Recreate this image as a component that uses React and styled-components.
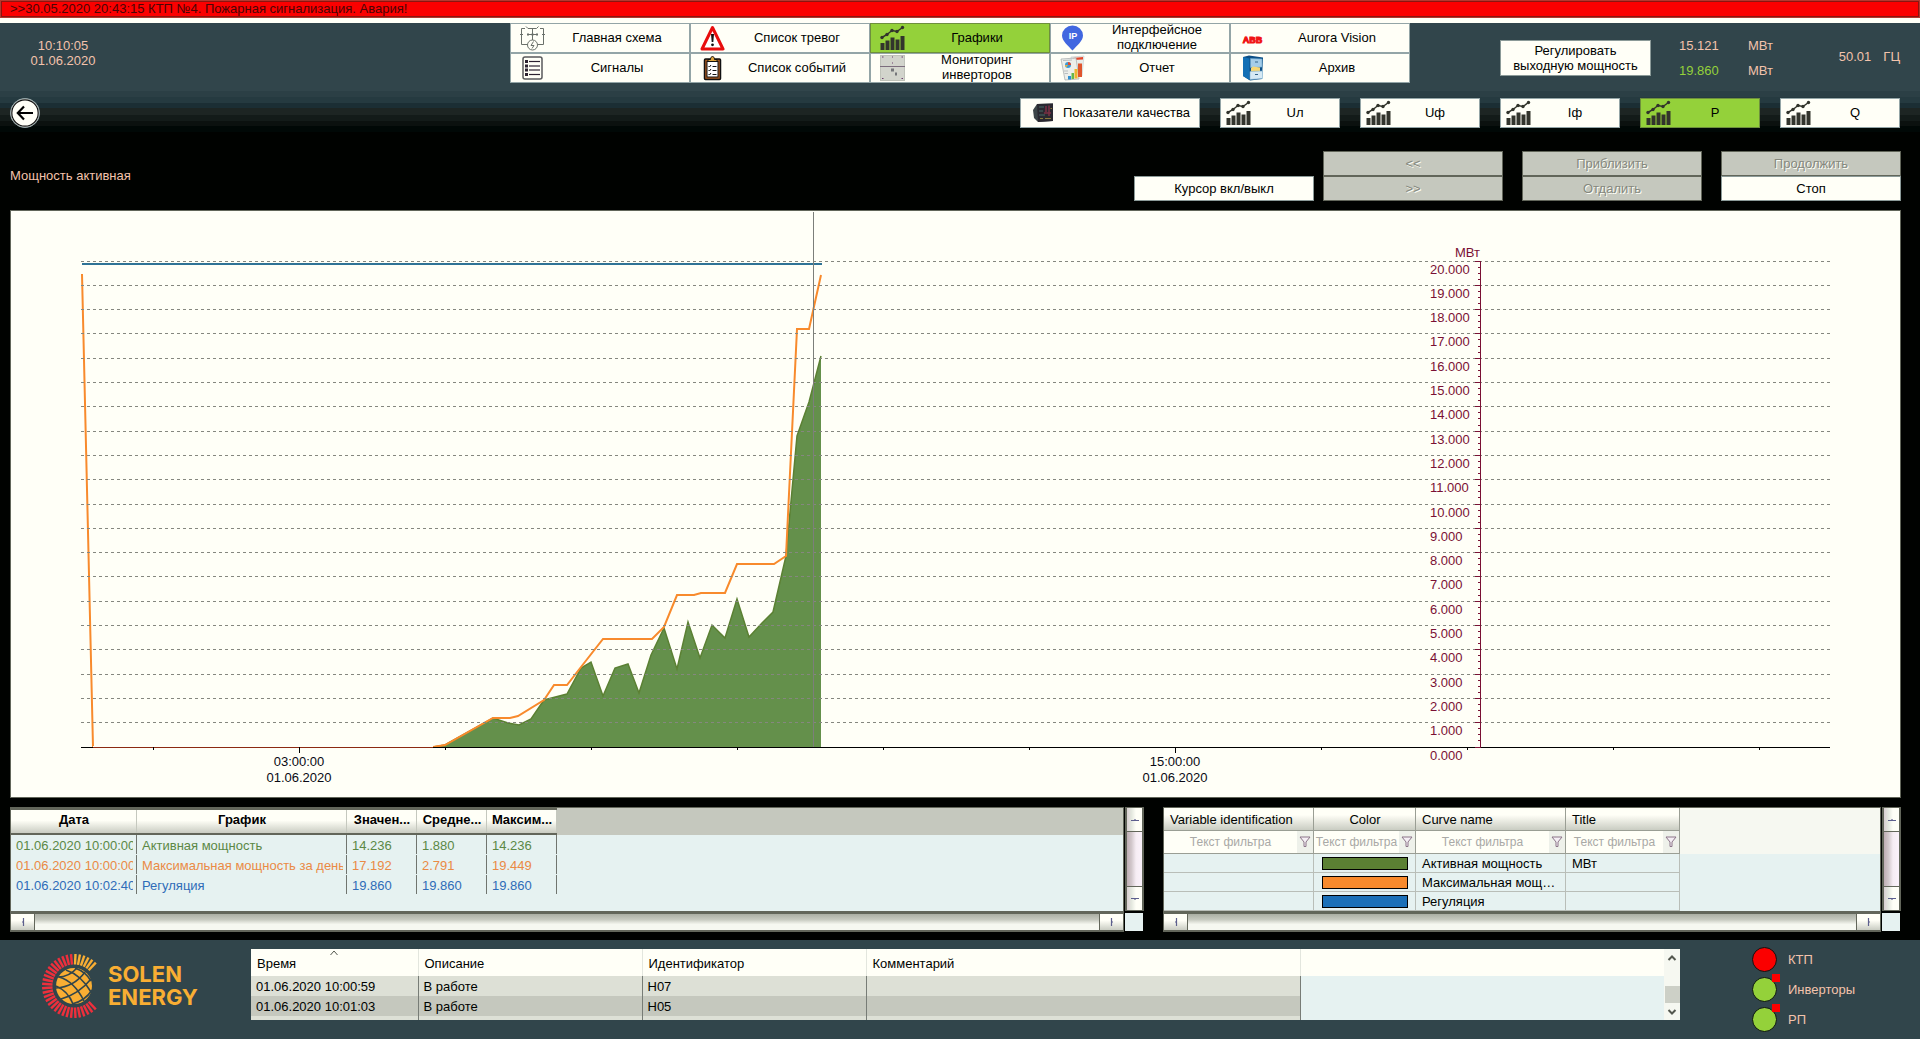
import React from "react";
import styled, { createGlobalStyle, css } from "styled-components";

const color = {
  paper: "#fffff7",
  slate: "#31454b",
  black: "#000200",
  peach: "#f3c3ac",
  lime: "#94d13a",
  mint: "#e6f2f1",
  grey: "#c5c8be",
  edge: "#62665a",
  axis: "#7a1034",
  green: "#5b8033",
  orange: "#f88a2c",
  blue: "#1b70b8",
};

const Global = createGlobalStyle`
  *, *::before, *::after { box-sizing: border-box; }
  html, body { margin: 0; background: ${color.black}; }
  body, button, input {
    font-family: "Liberation Sans", Arial, sans-serif;
    font-size: 13px;
    line-height: 15px;
  }
  button { padding: 0; cursor: pointer; }
  table { border-collapse: collapse; table-layout: fixed; }
  th, td { padding: 0; text-align: left; }
`;

const Page = styled.div`
  display: flex;
  flex-direction: column;
  min-height: 100vh;
`;

const AlertBar = styled.div`
  height: 18px;
  padding-left: 9px;
  border: 1px solid #b3392f;
  background: #fb0000;
  box-shadow: inset 0 0 0 1px #8c1410;
  color: #4a0505;
  line-height: 16px;
  white-space: nowrap;
  overflow: hidden;
`;

const Header = styled.header`
  display: grid;
  grid-template-columns: 1fr 900px 1fr;
  border-top: 5px solid ${color.paper};
  background: ${color.slate};
  color: ${color.peach};
`;

const Clock = styled.div`
  width: 126px;
  padding-top: 15px;
  text-align: center;
`;

const Nav = styled.nav`
  display: grid;
  grid-template-columns: repeat(5, 1fr);
`;

const IconButton = styled.button`
  display: flex;
  align-items: center;
  width: ${(p) => (p.$width ? `${p.$width}px` : "auto")};
  height: 30px;
  padding-left: ${(p) => p.$inset ?? 9}px;
  border: 1px solid ${(p) => (p.$active ? "#6e8f3c" : "#93a5a7")};
  background: ${(p) => (p.$active ? color.lime : color.paper)};
  color: ${color.black};

  svg { flex: none; }
  span { flex: 1; padding-bottom: 2px; text-align: center; }
`;

const PlainButton = styled.button`
  width: ${(p) => p.$width ?? 180}px;
  height: ${(p) => p.$height ?? 25}px;
  padding: 0 10px;
  border: 1px solid #8b9a98;
  background: ${color.paper};
  color: ${color.black};

  &:disabled {
    border-color: ${color.edge};
    background: ${color.grey};
    color: #85887e;
    text-shadow: 1px 1px 0 ${color.paper};
    cursor: default;
  }
`;

const Readings = styled.div`
  display: flex;
  align-items: flex-start;
  padding: 15px 20px 0 90px;
`;

const Regulate = styled.div`
  padding-top: 2px;
`;

const PowerGrid = styled.dl`
  display: grid;
  grid-template-columns: 69px auto;
  row-gap: 10px;
  margin: 0 0 0 28px;
  dt, dd { margin: 0; }
`;

const Reading = styled.dt`
  color: ${(p) => (p.$good ? color.lime : color.peach)};
`;

const Frequency = styled.div`
  display: flex;
  gap: 12px;
  margin: 11px 0 0 auto;
`;

const SubHeader = styled.div`
  display: flex;
  align-items: center;
  gap: 20px;
  padding: 15px 20px 4px 10px;
  background: linear-gradient(
    ${color.slate} 8px, #2b3f45 8px, #2b3f45 14px, #253a40 14px, #253a40 20px,
    #1b2e34 20px, #1b2e34 25px, #1d2523 25px, #1d2523 32px, #131b19 32px,
    #131b19 38px, #0b110f 38px, #0b110f 43px, #000806 43px
  );
`;

const BackButton = styled.button`
  display: flex;
  width: 30px;
  height: 30px;
  margin-right: auto;
  border: 0;
  border-radius: 50%;
  background: none;
`;

const ToolRow = styled.div`
  display: flex;
  align-items: center;
  gap: 19px;
  padding: 19px 19px 9px 10px;
  background: ${color.black};
`;

const Title = styled.h1`
  margin: 0 auto 0 0;
  padding-bottom: 2px;
  color: ${color.peach};
  font-size: 13px;
  font-weight: 400;
`;

const Stack = styled.div`
  display: flex;
  flex-direction: column;
`;

const CursorGroup = styled.div`
  display: flex;
  align-items: flex-end;
  gap: 9px;
`;

const ChartPanel = styled.section`
  margin: 0 19px 9px 10px;
  border: 1px solid ${color.edge};
  background: ${color.paper};
  svg { display: block; width: 100%; height: auto; }
  text { font-family: "Liberation Sans", Arial, sans-serif; font-size: 13px; }
`;

const Tables = styled.div`
  display: grid;
  grid-template-columns: minmax(0, 1134fr) minmax(0, 738fr);
  gap: 19px;
  padding: 0 19px 8px 10px;
`;

const ScrollPanel = styled.section`
  display: grid;
  grid-template-columns: minmax(0, 1fr) 19px;
  grid-template-rows: 104px 21px;
  column-gap: 1px;
`;

const Viewport = styled.div`
  overflow: hidden;
  border: 1px solid ${color.edge};
  border-bottom: 0;
  background: linear-gradient(${(p) => p.$top} ${(p) => p.$head}px, ${color.mint} ${(p) => p.$head}px);
`;

const VBar = styled.div`
  display: flex;
  flex-direction: column;
  justify-content: space-between;
  border: 1px solid ${color.edge};
  border-left-width: 2px;
  border-right-width: 2px;
  background: linear-gradient(90deg, #bfaeb4, #d2c8cc 30%, #f6edf4 60%, #fbf2fb);
`;

const HBar = styled.div`
  display: flex;
  justify-content: space-between;
  border: solid ${color.edge};
  border-width: 3px 1px 2px;
  background: linear-gradient(#aaaea3, #c6c9bf 35%, #e0e2da 50%, #f6f8f1 65%);
`;

const Corner = styled.div`
  margin: 2px 1px 1px 0;
  background: ${color.mint};
`;

const ArrowButton = styled.button`
  display: flex;
  align-items: center;
  justify-content: center;
  border: 0 solid ${color.edge};
  ${(p) =>
    p.$vertical
      ? css`
          height: 24px;
          background: linear-gradient(90deg, #d9cfd2, #e4e8df 30%, ${color.paper} 60%);
          &:first-child { border-bottom-width: 1px; }
          &:last-child { border-top-width: 1px; }
        `
      : css`
          width: 24px;
          background: linear-gradient(${color.paper} 40%, #c9ccc2);
          &:first-child { border-right-width: 1px; }
          &:last-child { border-left-width: 1px; }
        `}
`;

const ValueTable = styled.table`
  width: 546px;
  border-collapse: separate;
  border-spacing: 0;
  th {
    height: 27px;
    padding-top: 2px;
    border: solid ${color.edge};
    border-width: 2px 0 2px;
    box-shadow: inset -1px 0 0 ${color.grey};
    background: linear-gradient(${color.paper} 45%, #c9ccc2);
    font-weight: 700;
    text-align: center;
    vertical-align: top;
    white-space: nowrap;
  }
  td {
    height: 20px;
    padding: 0 4px 0 5px;
    background: linear-gradient(#70756f, #70756f) right top / 1px 19px no-repeat;
    white-space: nowrap;
  }
`;

const Clip = styled.div`
  overflow: hidden;
`;

const ValueRow = styled.tr`
  color: ${(p) => p.$color};
`;

const CurveTable = styled.table`
  width: 516px;
  color: ${color.black};
  th, td {
    box-shadow: inset -1px -1px 0 #b9beb8;
    white-space: nowrap;
    overflow: hidden;
    text-overflow: ellipsis;
  }
  thead th {
    height: 23px;
    padding: 0 6px;
    box-shadow: inset -1px -1px 0 #9a9e94;
    background: linear-gradient(${color.paper} 30%, #c6c9bf);
    font-weight: 400;
  }
  thead td {
    height: 23px;
    box-shadow: inset -1px -1px 0 #9a9e94;
    background: ${color.paper};
  }
  tbody td { height: 19px; padding: 0 6px; }
  th:nth-child(2) { text-align: center; }
`;

const FilterCell = styled.div`
  display: flex;
  height: 22px;
  margin: 0 1px 1px 0;
`;

const FilterInput = styled.input`
  flex: 1;
  min-width: 0;
  padding: 0;
  border: 0;
  background: none;
  font-size: 12px;
  text-align: center;
  &::placeholder { color: #a9a9a6; opacity: 1; }
`;

const FilterButton = styled.button`
  display: flex;
  align-items: center;
  justify-content: center;
  width: 16px;
  border: 0;
  background: #eef1ea;
`;

const Swatch = styled.div`
  width: 86px;
  height: 13px;
  margin: 0 auto;
  border: 1px solid #000;
  background: ${(p) => p.$color};
`;

const Footer = styled.footer`
  display: flex;
  flex: 1;
  align-items: flex-start;
  min-height: 99px;
  background: ${color.slate};
`;

const Brand = styled.div`
  display: flex;
  align-items: center;
  gap: 11px;
  flex: none;
  width: 251px;
  padding: 13px 0 0 41px;
  color: #f9ae33;
  font-family: Inter, "Open Sans", sans-serif;
  font-size: 22px;
  font-weight: 700;
  line-height: 23px;
`;

const AlarmPanel = styled.section`
  display: flex;
  flex: 1;
  height: 71px;
  margin-top: 9px;
  overflow: hidden;
  background: linear-gradient(${color.paper} 27px, ${color.mint} 27px);
`;

const AlarmTable = styled.table`
  width: 1049px;
  color: ${color.black};
  th {
    position: relative;
    height: 27px;
    padding: 2px 6px 0;
    border-right: 1px solid #e3e6de;
    font-weight: 400;
  }
  td { height: 20px; padding: 0 5px; border-right: 1px solid #777c76; }
  tbody tr { background: #dde0d6; }
  tbody tr:nth-child(2) { background: ${color.grey}; }
`;

const SortMark = styled.svg`
  position: absolute;
  top: 1px;
  left: 50%;
  margin-left: -4px;
`;

const AlarmScroll = styled.div`
  display: flex;
  flex-direction: column;
  align-items: center;
  flex: none;
  width: 16px;
  margin-left: auto;
  background: #f6f8f1;
`;

const ScrollArrow = styled.button`
  display: flex;
  align-items: center;
  justify-content: center;
  width: 16px;
  height: 17px;
  border: 0;
  background: none;
`;

const Thumb = styled.div`
  width: 15px;
  height: 17px;
  margin-top: auto;
  background: #cdd0c7;
`;

const StatusList = styled.ul`
  display: flex;
  flex-direction: column;
  gap: 5px;
  flex: none;
  width: 240px;
  margin: 0;
  padding: 7px 0 0 72px;
  list-style: none;
  color: ${color.peach};
`;

const StatusItem = styled.li`
  display: flex;
  align-items: center;
  gap: 11px;
`;

const Lamp = styled.span`
  position: relative;
  width: 25px;
  height: 25px;
  border: 1px solid #0c1412;
  border-radius: 50%;
  background: ${(p) => (p.$bad ? "#fb0000" : color.lime)};
`;

const Flag = styled.i`
  position: absolute;
  top: -4px;
  right: -4px;
  width: 8px;
  height: 8px;
  background: #fb0000;
`;

/* ---------- icons ---------- */

const SchemeIcon = () => (
  <svg width="25" height="26" viewBox="0 0 25 26" fill="none" stroke="#6a706a" strokeWidth="1">
    <path d="M6 1.5 8 3.5H16.500L18.500 1.500M12.500 3.500V15M1.500 3.500H5M1.500 3.500V19.500H7.500M23.500 3.500H20M23.500 3.500V19.500H17.500M7 9.500H18M0 9.500H3M22 9.500H25" />
    <circle cx="12.500" cy="20" r="5" />
    <path d="M13.500 16.500 11 20.500H14L12 23.500" />
    <path d="M8 8.500V10.500M17 8.500V10.500M12.500 8.500V10.500" strokeWidth="2" />
  </svg>
);

const SignalsIcon = () => (
  <svg width="25" height="26" viewBox="0 0 25 26">
    <rect x="3" y="2" width="19" height="22" rx="2" fill="#fffff7" stroke="#5a5a5c" strokeWidth="1.500" />
    {[6.5, 11, 15, 19.5].map((y) => (
      <g key={y} stroke="#2b2030">
        <path d={`M5 ${y}H8`} strokeWidth="3" />
        <path d={`M9 ${y}H20`} strokeWidth="1.200" />
      </g>
    ))}
  </svg>
);

const AlarmIcon = () => (
  <svg width="25" height="26" viewBox="0 0 25 26">
    <path d="M12.500 2.500 23 24H2Z" fill="#fff" stroke="#e80d0d" strokeWidth="3" strokeLinejoin="round" />
    <path d="M11 9H14L13.300 17H11.700Z" fill="#111" />
    <circle cx="12.500" cy="19.800" r="1.400" fill="#111" />
  </svg>
);

const ClipboardIcon = () => (
  <svg width="25" height="26" viewBox="0 0 25 26">
    <rect x="4.500" y="4" width="16" height="20.500" rx="1" fill="#a9591f" stroke="#111" strokeWidth="1.500" />
    <rect x="7" y="6.500" width="11" height="15.500" fill="#fff" stroke="#111" />
    <path d="M8 6.500V4.500H10.500C10.500 0.500 14.500 0.500 14.500 4.500H17V6.500Z" fill="#e0a63c" stroke="#111" />
    <path d="M8.500 11 9.500 12 11 10M8.500 15 9.500 16 11 14M8.500 19 9.500 20 11 18M12.500 11.500H16.500M12.500 15.500H16.500M12.500 19.500H16.500" stroke="#111" fill="none" />
  </svg>
);

const ChartIcon = () => (
  <svg width="25" height="26" viewBox="0 0 25 26">
    <path d="M2 12.500 7 9.500 12 5.500 17 6.500 22.500 2.500" fill="none" stroke="#32342c" strokeWidth="1.500" />
    {[[2, 12.5], [7, 9.5], [12, 5.5], [17, 6.5], [22.5, 2.5]].map(([x, y]) => (
      <circle key={x} cx={x} cy={y} r="1.700" fill="#32342c" />
    ))}
    <path d="M0.500 18H4.500V25H0.500ZM5.500 15.500H9.500V25H5.500ZM10.500 12.500H14.500V25H10.500ZM15.500 14.500H19.500V25H15.500ZM20.500 11H24.500V25H20.500Z" fill="#32342c" />
  </svg>
);

const InverterIcon = () => (
  <svg width="25" height="26" viewBox="0 0 25 26">
    <rect x="0.500" y="0.500" width="24" height="25" fill="#d2d4cc" stroke="#bfc2b9" />
    <path d="M0 11.500H25" stroke="#7c6d7d" />
    <path d="M11 13.500H14V16.500H11ZM15 17.500H17V20.500H15Z" fill="#75767a" />
    <path d="M2 2H3.500M21.500 2H23M12 2H13M12 8H13M2 23.500H3.500M21.500 23.500H23" stroke="#6b3d6d" />
  </svg>
);

const IpIcon = () => (
  <svg width="25" height="26" viewBox="0 0 25 26">
    <path d="M12.500 25.500C8 20.500 2 16 2 10.500A10.500 10 0 0 1 23 10.500C23 16 17 20.500 12.500 25.500Z" fill="#4167e0" />
    <text x="13" y="14" textAnchor="middle" fontSize="9" fontWeight="700" fontFamily="Liberation Sans, sans-serif" fill="#fff">IP</text>
  </svg>
);

const ReportIcon = () => (
  <svg width="25" height="26" viewBox="0 0 25 26">
    <path d="M11 2 24 1 22 21 12 23Z" fill="#e9ece8" stroke="#c5cacc" strokeWidth=".6" />
    <path d="M13 3 23 2V4.500L13 5Z" fill="#e4472b" />
    <path d="M1 4 16 3 19 24 5 25Z" fill="#eceeea" stroke="#a3a9aa" strokeWidth=".7" />
    <path d="M3 5.500 12 5" stroke="#b9bec0" />
    <circle cx="8" cy="10" r="3" fill="#3a9ad6" />
    <path d="M8 10V7A3 3 0 0 1 11 10Z" fill="#e4472b" />
    <path d="M5 10H8L6 12.500Z" fill="#f2b033" />
    <path d="M4 16H8M4.500 18.500H8" stroke="#b9bec0" />
    <path d="M8 21H11V24.500H8Z" fill="#2f8fd0" />
    <path d="M11.500 18H14V24H11.500Z" fill="#66b847" />
    <path d="M14.500 14H17.500V23.500H14.500Z" fill="#f0b32c" />
    <path d="M18 8.500H22V22H18Z" fill="#e0552c" />
  </svg>
);

const AbbIcon = () => (
  <svg width="25" height="26" viewBox="0 0 25 26">
    <text x="12.500" y="18" textAnchor="middle" fontSize="9" fontWeight="700" fontFamily="Liberation Sans, sans-serif" fill="#f01414" stroke="#f01414" strokeWidth="1">ABB</text>
  </svg>
);

const ArchiveIcon = () => (
  <svg width="25" height="26" viewBox="0 0 25 26">
    <path d="M3 2 9 0.500 23 2.500 22 24 10 25.500 3 21Z" fill="#0c4f86" />
    <path d="M3 2 9.500 3.500V25L3 21Z" fill="#1370b5" />
    <path d="M10.500 3.500 22 4V12L10.500 12.500Z" fill="#a5cde8" stroke="#6aa6cf" strokeWidth=".6" />
    <path d="M15 7H18" stroke="#33658a" />
    <path d="M11 13 13 11.500 20 12.500V17H11Z" fill="#f7d774" />
    <path d="M10 16.500 22.500 16V23.500L10 24.500Z" fill="#d5e9f4" stroke="#7fb2d2" strokeWidth=".6" />
    <path d="M15 19.500H18" stroke="#33658a" />
  </svg>
);

const QualityIcon = () => (
  <svg width="22" height="22" viewBox="0 0 22 22">
    <path d="M1 8 5 2 21 1.500V19L6 20 2 16Z" fill="#3c4547" />
    <path d="M5 2 21 1.500V19L6 20Z" fill="#2a2930" />
    <path d="M7 5H12M7 9H11M7 13H13" stroke="#466b66" />
    <path d="M14 4V10M17 3.500V14M12 11H19" stroke="#7d2f43" strokeWidth="1.500" />
    <path d="M8 16.500H11M13 16.500H19M18.500 6.500H20" stroke="#8a7b3a" />
  </svg>
);

const BackIcon = () => (
  <svg width="30" height="30" viewBox="0 0 30 30">
    <circle cx="15" cy="15" r="14.500" fill="#fffff7" stroke="#93a5a7" />
    <circle cx="15" cy="15" r="13.200" fill="#fffff7" stroke="#111" strokeWidth="1.200" />
    <path d="M23 15H8M14 8.500 7.800 15 14 21.500" fill="none" stroke="#000" strokeWidth="2.200" />
  </svg>
);

const FunnelIcon = () => (
  <svg width="12" height="12" viewBox="0 0 12 12">
    <path d="M1 1H11L7 6V10.500H5V6Z" fill="#f4eef4" stroke="#8b7488" />
  </svg>
);

const pointers = {
  up: "M1 5.500H9M5 4V5",
  down: "M1 4.500H9M5 5V6",
  left: "M5.500 1V9M4 5H5",
  right: "M4.500 1V9M5 5H6",
};

const Arrow = ({ dir }) => (
  <svg width="10" height="10" viewBox="0 0 10 10">
    <path d={pointers[dir]} stroke="#5d5f8e" strokeWidth="1.200" />
  </svg>
);

const Chevron = ({ up }) => (
  <svg width="10" height="8" viewBox="0 0 10 8">
    <path d={up ? "M1.500 6 5 2.500 8.500 6" : "M1.500 2 5 5.500 8.500 2"} fill="none" stroke="#54584f" strokeWidth="2" />
  </svg>
);

const rays = Array.from({ length: 34 }, (_, i) => {
  const deg = -47 - i * (266 / 33);
  const a = (deg * Math.PI) / 180;
  return {
    x1: 33 + 21.5 * Math.cos(a),
    y1: 33 + 21.5 * Math.sin(a),
    x2: 33 + 32 * Math.cos(a),
    y2: 33 + 32 * Math.sin(a),
    gold: i < 6,
  };
});

const LogoIcon = () => (
  <svg width="56" height="66" viewBox="0 0 56 66">
    {rays.map((r, i) => (
      <line key={i} x1={r.x1} y1={r.y1} x2={r.x2} y2={r.y2} stroke={r.gold ? "#f9ae33" : "#ee2f3c"} strokeWidth="2.400" />
    ))}
    <circle cx="33" cy="33" r="18" fill="#f9ae33" />
    <g fill="none" stroke="#31454b" strokeWidth="1.600">
      <path d="M17 24Q28 24 36 15M15 35Q33 34 44 19M20 46Q38 41 50 26M31 51Q44 48 51 37" />
      <path d="M25 17Q40 22 50 39M18 24Q33 28 43 48M15 33Q27 38 32 51M34 15Q45 19 50 28" />
    </g>
  </svg>
);

/* ---------- chart ---------- */

const LEFT = 81;
const RIGHT = 1830;
const TOP = 261;
const BASE = 747;
const AXIS_X = 1480;

const level = (v) => Math.floor(BASE - (v * (BASE - TOP)) / 20) + 0.5;

const activePower = [
  [433, 747], [445, 745], [493, 718], [508, 723], [519, 725], [531, 719], [544, 700],
  [567, 694], [581, 668], [591, 662], [603, 696], [615, 668], [628, 664], [639, 693],
  [651, 655], [664, 628], [677, 669], [688, 622], [700, 658], [712, 625], [725, 638],
  [737, 599], [749, 637], [762, 623], [773, 612], [786, 556], [797, 436], [809, 402],
  [821, 356],
];

const maxPower = [
  [82, 274], [93, 747], [433, 747], [445, 745], [493, 718], [510, 718], [518, 716],
  [544, 700], [554, 685], [567, 685], [581, 667], [603, 639], [652, 639], [664, 627],
  [677, 595], [694, 595], [701, 593], [725, 593], [737, 564], [774, 564], [786, 556],
  [797, 329], [809, 329], [821, 275],
];

const toPoints = (list) => list.map((p) => p.join(",")).join(" ");

const PowerChart = () => (
  <svg viewBox="11 211 1889 586" role="img" aria-label="Мощность активная">
    <polygon points={`${toPoints(activePower)} 821,${BASE} 433,${BASE}`} fill="#64904b" />
    <polyline points={toPoints(activePower)} fill="none" stroke={color.green} strokeWidth="1.500" />
    <polyline points={toPoints(maxPower)} fill="none" stroke={color.orange} strokeWidth="2" />
    <line x1={LEFT} x2={RIGHT} y1={BASE + 0.5} y2={BASE + 0.5} stroke="#000" strokeWidth="1" />
    <line x1="93" x2="433" y1={BASE - 0.5} y2={BASE - 0.5} stroke="#fffff7" />
    <line x1="93" x2="433" y1={BASE + 0.5} y2={BASE + 0.5} stroke="#8c2a12" />
    {Array.from({ length: 20 }, (_, i) => (
      <line key={i} x1={LEFT} x2={RIGHT} y1={level(i + 1)} y2={level(i + 1)} stroke="#85877f" strokeDasharray="3 3" />
    ))}
    <line x1="82" x2="822" y1="264" y2="264" stroke="#2f7396" strokeWidth="2" />
    <line x1="813.500" x2="813.500" y1="212" y2={BASE} stroke="#7c7f7a" shapeRendering="crispEdges" />
    {Array.from({ length: 12 }, (_, i) => {
      const x = Math.round(153 + i * 146) + 0.5;
      return <line key={i} x1={x} x2={x} y1={BASE} y2={BASE + (i === 1 || i === 7 ? 6 : 3)} stroke="#000" />;
    })}
    {[[299, "03:00:00"], [1175, "15:00:00"]].map(([x, time]) => (
      <g key={x} textAnchor="middle" fill="#0a0a14">
        <text x={x} y="766">{time}</text>
        <text x={x} y="782">01.06.2020</text>
      </g>
    ))}
    <g stroke={color.axis} shapeRendering="crispEdges">
      <line x1={AXIS_X + 0.5} x2={AXIS_X + 0.5} y1={TOP} y2={BASE + 1} />
      {Array.from({ length: 81 }, (_, i) => (
        <line key={i} x1={AXIS_X - (i % 4 ? 2 : 5)} x2={AXIS_X + (i % 4 ? 0 : 1)} y1={level(i / 4)} y2={level(i / 4)} />
      ))}
    </g>
    <g fill={color.axis}>
      <text x="1455" y="257">МВт</text>
      {Array.from({ length: 21 }, (_, i) => (
        <text key={i} x="1430" y={level(i) + 12.5}>{i.toFixed(3)}</text>
      ))}
    </g>
  </svg>
);

/* ---------- data ---------- */

const navItems = [
  ["Главная схема", SchemeIcon],
  ["Список тревог", AlarmIcon],
  ["Графики", ChartIcon, true],
  ["Интерфейсное подключение", IpIcon],
  ["Aurora Vision", AbbIcon],
  ["Сигналы", SignalsIcon],
  ["Список событий", ClipboardIcon],
  ["Мониторинг инверторов", InverterIcon],
  ["Отчет", ReportIcon],
  ["Архив", ArchiveIcon],
];

const values = [
  ["#5b8845", "01.06.2020 10:00:00", "Активная мощность", "14.236", "1.880", "14.236"],
  ["#ea8a45", "01.06.2020 10:00:00", "Максимальная мощность за день", "17.192", "2.791", "19.449"],
  ["#2f6cb8", "01.06.2020 10:02:40", "Регуляция", "19.860", "19.860", "19.860"],
];

const curves = [
  [color.green, "Активная мощность", "МВт"],
  [color.orange, "Максимальная мощность за день", ""],
  [color.blue, "Регуляция", ""],
];

const alarms = [
  ["01.06.2020 10:00:59", "В работе", "H07", ""],
  ["01.06.2020 10:01:03", "В работе", "H05", ""],
  ["", "", "", ""],
];

const Cols = ({ widths }) => (
  <colgroup>
    {widths.map((w, i) => (
      <col key={i} style={{ width: w }} />
    ))}
  </colgroup>
);

const Scrollable = ({ top, head, children }) => (
  <ScrollPanel>
    <Viewport $top={top} $head={head}>{children}</Viewport>
    <VBar>
      <ArrowButton $vertical aria-label="Вверх"><Arrow dir="up" /></ArrowButton>
      <ArrowButton $vertical aria-label="Вниз"><Arrow dir="down" /></ArrowButton>
    </VBar>
    <HBar>
      <ArrowButton aria-label="Влево"><Arrow dir="left" /></ArrowButton>
      <ArrowButton aria-label="Вправо"><Arrow dir="right" /></ArrowButton>
    </HBar>
    <Corner />
  </ScrollPanel>
);

export default function App() {
  return (
    <Page>
      <Global />
      <AlertBar role="alert">&gt;&gt;30.05.2020 20:43:15 КТП №4. Пожарная сигнализация. Авария!</AlertBar>
      <Header>
        <Clock>
          <div>10:10:05</div>
          <div>01.06.2020</div>
        </Clock>
        <Nav>
          {navItems.map(([label, Icon, active]) => (
            <IconButton key={label} $active={active}>
              <Icon />
              <span>{label}</span>
            </IconButton>
          ))}
        </Nav>
        <Readings>
          <Regulate>
            <PlainButton $width={151} $height={36}>Регулировать выходную мощность</PlainButton>
          </Regulate>
          <PowerGrid>
            <Reading>15.121</Reading>
            <dd>МВт</dd>
            <Reading $good>19.860</Reading>
            <dd>МВт</dd>
          </PowerGrid>
          <Frequency>
            <span>50.01</span>
            <span>ГЦ</span>
          </Frequency>
        </Readings>
      </Header>
      <SubHeader>
        <BackButton aria-label="Назад"><BackIcon /></BackButton>
        <IconButton $width={180} $inset={11}>
          <QualityIcon />
          <span>Показатели качества</span>
        </IconButton>
        {["Uл", "Uф", "Iф", "P", "Q"].map((label) => (
          <IconButton key={label} $width={120} $inset={5} $active={label === "P"}>
            <ChartIcon />
            <span>{label}</span>
          </IconButton>
        ))}
      </SubHeader>
      <ToolRow>
        <Title>Мощность активная</Title>
        <CursorGroup>
          <PlainButton>Курсор вкл/выкл</PlainButton>
          <Stack>
            <PlainButton disabled>&lt;&lt;</PlainButton>
            <PlainButton disabled>&gt;&gt;</PlainButton>
          </Stack>
        </CursorGroup>
        <Stack>
          <PlainButton disabled>Приблизить</PlainButton>
          <PlainButton disabled>Отдалить</PlainButton>
        </Stack>
        <Stack>
          <PlainButton disabled>Продолжить</PlainButton>
          <PlainButton>Стоп</PlainButton>
        </Stack>
      </ToolRow>
      <ChartPanel>
        <PowerChart />
      </ChartPanel>
      <Tables>
        <Scrollable top={color.grey} head={27}>
          <ValueTable>
            <Cols widths={[126, 210, 70, 70, 70]} />
            <thead>
              <tr>
                {["Дата", "График", "Значен...", "Средне...", "Максим..."].map((h) => (
                  <th key={h}>{h}</th>
                ))}
              </tr>
            </thead>
            <tbody>
              {values.map(([tone, ...cells]) => (
                <ValueRow key={cells[1]} $color={tone}>
                  {cells.map((c, i) => (
                    <td key={i}><Clip>{c}</Clip></td>
                  ))}
                </ValueRow>
              ))}
            </tbody>
          </ValueTable>
        </Scrollable>
        <Scrollable top="#f6f8f1" head={46}>
          <CurveTable>
            <Cols widths={[150, 102, 150, 114]} />
            <thead>
              <tr>
                {["Variable identification", "Color", "Curve name", "Title"].map((h) => (
                  <th key={h}>{h}</th>
                ))}
              </tr>
              <tr>
                {["Variable identification", "Color", "Curve name", "Title"].map((h) => (
                  <td key={h}>
                    <FilterCell>
                      <FilterInput placeholder="Текст фильтра" aria-label={h} />
                      <FilterButton aria-label="Фильтр"><FunnelIcon /></FilterButton>
                    </FilterCell>
                  </td>
                ))}
              </tr>
            </thead>
            <tbody>
              {curves.map(([tone, name, unit]) => (
                <tr key={name}>
                  <td />
                  <td><Swatch $color={tone} /></td>
                  <td>{name}</td>
                  <td>{unit}</td>
                </tr>
              ))}
            </tbody>
          </CurveTable>
        </Scrollable>
      </Tables>
      <Footer>
        <Brand>
          <LogoIcon />
          <div>
            <div>SOLEN</div>
            <div>ENERGY</div>
          </div>
        </Brand>
        <AlarmPanel>
          <AlarmTable>
            <Cols widths={[167, 224, 224, 434]} />
            <thead>
              <tr>
                <th>
                  Время
                  <SortMark width="8" height="6" viewBox="0 0 8 6">
                    <path d="M0.500 5 4 1 7.500 5" fill="none" stroke="#54584f" />
                  </SortMark>
                </th>
                <th>Описание</th>
                <th>Идентификатор</th>
                <th>Комментарий</th>
              </tr>
            </thead>
            <tbody>
              {alarms.map((row, r) => (
                <tr key={r}>
                  {row.map((c, i) => (
                    <td key={i}>{c}</td>
                  ))}
                </tr>
              ))}
            </tbody>
          </AlarmTable>
          <AlarmScroll>
            <ScrollArrow aria-label="Вверх"><Chevron up /></ScrollArrow>
            <Thumb />
            <ScrollArrow aria-label="Вниз"><Chevron /></ScrollArrow>
          </AlarmScroll>
        </AlarmPanel>
        <StatusList>
          <StatusItem><Lamp $bad /><span>КТП</span></StatusItem>
          <StatusItem><Lamp><Flag /></Lamp><span>Инверторы</span></StatusItem>
          <StatusItem><Lamp><Flag /></Lamp><span>РП</span></StatusItem>
        </StatusList>
      </Footer>
    </Page>
  );
}
